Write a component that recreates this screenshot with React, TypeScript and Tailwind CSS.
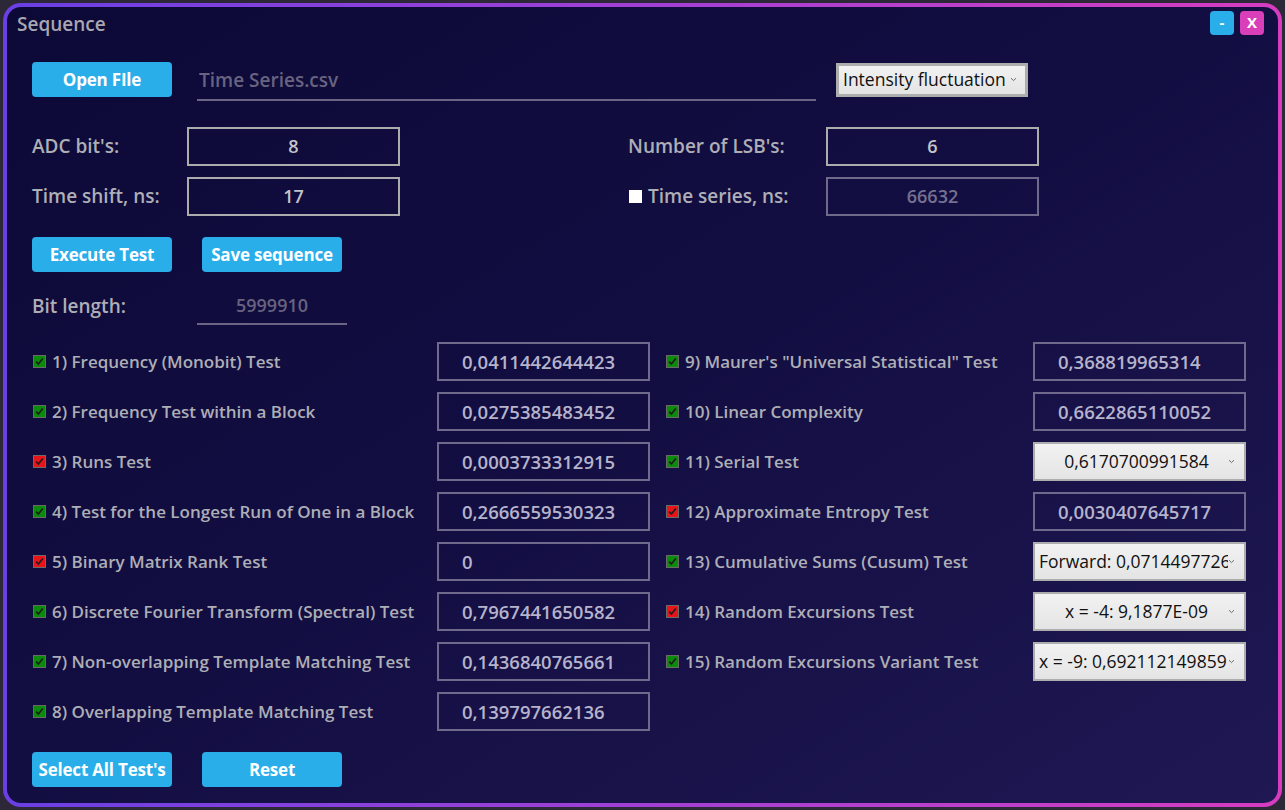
import React from "react";

const font = { fontFamily: "'Open Sans', 'Noto Sans', sans-serif" };

type Test = { n: string; ok: boolean; kind: "box" | "drop"; value: string; align?: "center" | "left" };

const left: Test[] = [
  { n: "1) Frequency (Monobit) Test", ok: true, kind: "box", value: "0,0411442644423" },
  { n: "2) Frequency Test within a Block", ok: true, kind: "box", value: "0,0275385483452" },
  { n: "3) Runs Test", ok: false, kind: "box", value: "0,0003733312915" },
  { n: "4) Test for the Longest Run of One in a Block", ok: true, kind: "box", value: "0,2666559530323" },
  { n: "5) Binary Matrix Rank Test", ok: false, kind: "box", value: "0" },
  { n: "6) Discrete Fourier Transform (Spectral) Test", ok: true, kind: "box", value: "0,7967441650582" },
  { n: "7) Non-overlapping Template Matching Test", ok: true, kind: "box", value: "0,1436840765661" },
  { n: "8) Overlapping Template Matching Test", ok: true, kind: "box", value: "0,139797662136" },
];

const right: Test[] = [
  { n: "9) Maurer's \"Universal Statistical\" Test", ok: true, kind: "box", value: "0,368819965314" },
  { n: "10) Linear Complexity", ok: true, kind: "box", value: "0,6622865110052" },
  { n: "11) Serial Test", ok: true, kind: "drop", value: "0,6170700991584", align: "center" },
  { n: "12) Approximate Entropy Test", ok: false, kind: "box", value: "0,0030407645717" },
  { n: "13) Cumulative Sums (Cusum) Test", ok: true, kind: "drop", value: "Forward: 0,0714497726", align: "left" },
  { n: "14) Random Excursions Test", ok: false, kind: "drop", value: "x = -4: 9,1877E-09", align: "center" },
  { n: "15) Random Excursions Variant Test", ok: true, kind: "drop", value: "x = -9: 0,692112149859", align: "left" },
];

function Chevron() {
  return (
    <svg width="7" height="5" viewBox="0 0 7 5" className="shrink-0">
      <path d="M1 1.2 L3.5 3.6 L6 1.2" fill="none" stroke="#6d6d6d" strokeWidth="1" />
    </svg>
  );
}

function Check({ ok }: { ok: boolean }) {
  return (
    <div
      className={`w-[13px] h-[13px] border border-[#6a6a6a] flex items-center justify-center shrink-0 ${
        ok ? "bg-[#0b8a0b]" : "bg-[#e8141a]"
      }`}
    >
      <svg width="9" height="9" viewBox="0 0 9 9">
        <path d="M1.2 4.6 L3.4 7 L7.8 1.4" fill="none" stroke="#1d1d1d" strokeWidth="1.6" />
      </svg>
    </div>
  );
}

function Btn({ children }: { children: React.ReactNode }) {
  return (
    <div className="w-[140px] h-[35px] rounded-[4px] bg-[#29aeea] text-white font-bold text-[17px] tracking-[-0.2px] flex items-center justify-center whitespace-nowrap">
      {children}
    </div>
  );
}

function Drop({ value, align }: { value: string; align?: "center" | "left" }) {
  return (
    <div className="w-[213px] h-[39px] border-2 border-[#adadad] bg-gradient-to-b from-[#f2f2f2] to-[#e4e4e4] flex items-center pr-[9px] text-[17.5px] text-[#111]">
      <div
        className={`flex-1 overflow-hidden whitespace-nowrap ${
          align === "center" ? "text-center pl-[10px]" : "text-left pl-[4px]"
        }`}
      >
        {value}
      </div>
      <Chevron />
    </div>
  );
}

function ValBox({ value }: { value: string }) {
  return (
    <div className="w-[213px] h-[39px] border-2 border-[#6f6a8c] flex items-center pl-[23px] text-[18.5px] font-semibold text-[#b6b3cc] whitespace-nowrap">
      {value}
    </div>
  );
}

function Row({ t, first }: { t: Test; first: boolean }) {
  return (
    <div className="h-[39px] flex items-center">
      <div className={`flex-1 flex items-center gap-[6px] ${first ? "pl-[1px]" : ""}`}>
        <Check ok={t.ok} />
        <span className="text-[17px] font-semibold text-[#aeaeb6] whitespace-nowrap">{t.n}</span>
      </div>
      {t.kind === "box" ? <ValBox value={t.value} /> : <Drop value={t.value} align={t.align} />}
    </div>
  );
}

function FieldBox({ value, dim }: { value: string; dim?: boolean }) {
  return (
    <div
      className={`w-[213px] h-[39px] border-2 flex items-center justify-center text-[18px] font-semibold ${
        dim ? "border-[#6f6a8c] text-[#75718f]" : "border-[#acacac] text-[#c4c4c8]"
      }`}
    >
      {value}
    </div>
  );
}

export default function App() {
  return (
    <div className="w-[1285px] h-[810px] bg-[#2d2838] p-[3px]" style={font}>
      <div className="h-full rounded-[18px] bg-gradient-to-r from-[#6a3fe4] via-[#a23fd4] to-[#d63cc0] p-[4px]">
        <div className="h-full rounded-[14px] bg-gradient-to-br from-[#0c0937] via-[#130e42] to-[#1f1853] pl-[25px] pr-[14px] flex flex-col">
          {/* Title bar */}
          <div className="h-[34px] flex items-center -ml-[15px]">
            <span className="text-[19px] font-semibold text-[#a8a6b0] flex-1">Sequence</span>
            <div className="flex gap-[6px] mt-[-3px]">
              <div className="w-[24px] h-[24px] rounded-[4px] bg-[#29aeea] text-white font-bold text-[15px] flex items-center justify-center">
                -
              </div>
              <div className="w-[24px] h-[24px] rounded-[4px] bg-[#d93fb8] text-white font-bold text-[15px] flex items-center justify-center">
                X
              </div>
            </div>
          </div>

          {/* Open file row */}
          <div className="mt-[21px] h-[35px] flex items-center">
            <Btn>Open FIle</Btn>
            <div className="ml-[25px] w-[619px] h-[39px] border-b-2 border-[#6a6585] flex items-center pl-[2px] text-[19px] font-semibold text-[#68637f] mt-[4px]">
              Time Series.csv
            </div>
            <div className="ml-[20px] w-[192px] h-[34px] border-[3px] border-[#adadad] bg-gradient-to-b from-[#f2f2f2] to-[#e4e4e4] flex items-center pl-[4px] pr-[8px] text-[17.5px] text-[#111]">
              <span className="flex-1 whitespace-nowrap">Intensity fluctuation</span>
              <Chevron />
            </div>
          </div>

          {/* Parameter rows */}
          <div className="mt-[30px] flex flex-col gap-[11px]">
            <div className="flex items-center">
              <span className="w-[155px] text-[19px] font-semibold text-[#aeaeb6]">ADC bit's:</span>
              <FieldBox value="8" />
              <span className="ml-[228px] w-[198px] text-[19px] font-semibold text-[#aeaeb6]">Number of LSB's:</span>
              <FieldBox value="6" />
            </div>
            <div className="flex items-center">
              <span className="w-[155px] text-[19px] font-semibold text-[#aeaeb6]">Time shift, ns:</span>
              <FieldBox value="17" />
              <div className="ml-[229px] w-[197px] flex items-center gap-[6px]">
                <div className="w-[13px] h-[13px] bg-white" />
                <span className="text-[19px] font-semibold text-[#aeaeb6]">Time series, ns:</span>
              </div>
              <FieldBox value="66632" dim />
            </div>
          </div>

          {/* Action buttons */}
          <div className="mt-[21px] flex gap-[30px]">
            <Btn>Execute Test</Btn>
            <Btn>Save sequence</Btn>
          </div>

          {/* Bit length */}
          <div className="mt-[16px] flex items-center h-[37px]">
            <span className="w-[165px] text-[19px] font-semibold text-[#aeaeb6]">Bit length:</span>
            <div className="w-[150px] h-[37px] border-b-2 border-[#6a6585] flex items-center justify-center text-[18px] font-semibold text-[#68637f]">
              5999910
            </div>
          </div>

          {/* Tests */}
          <div className="mt-[17px] flex">
            <div className="w-[618px] flex flex-col gap-[11px]">
              {left.map((t) => (
                <Row key={t.n} t={t} first />
              ))}
            </div>
            <div className="ml-[16px] w-[580px] flex flex-col gap-[11px]">
              {right.map((t) => (
                <Row key={t.n} t={t} first={false} />
              ))}
            </div>
          </div>

          {/* Bottom buttons */}
          <div className="mt-[21px] flex gap-[30px]">
            <Btn>Select All Test's</Btn>
            <Btn>Reset</Btn>
          </div>
        </div>
      </div>
    </div>
  );
}
